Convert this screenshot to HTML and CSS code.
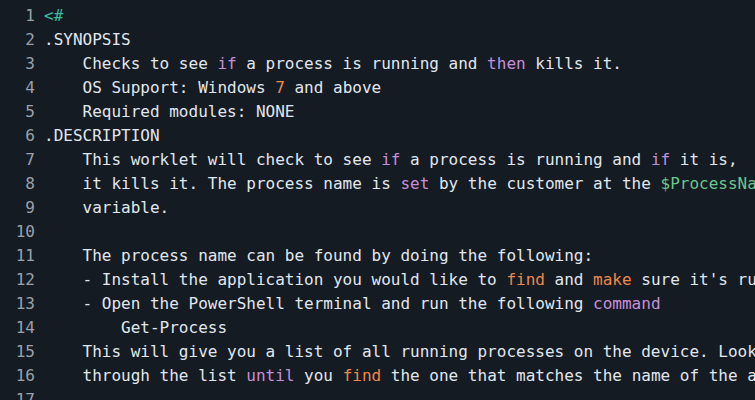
FILE: index.html
```html
<!DOCTYPE html>
<html>
<head>
<meta charset="utf-8">
<link rel="stylesheet" href="styles.css">
</head>
<body>
<div class="editor">
<div class="line"><span class="ln">1</span><span class="code"><span class="cm">&lt;#</span></span></div>
<div class="line"><span class="ln">2</span><span class="code">.SYNOPSIS</span></div>
<div class="line"><span class="ln">3</span><span class="code">    Checks to see <span class="kw">if</span> a process is running and <span class="kw">then</span> kills it.</span></div>
<div class="line"><span class="ln">4</span><span class="code">    OS Support: Windows <span class="num">7</span> and above</span></div>
<div class="line"><span class="ln">5</span><span class="code">    Required modules: NONE</span></div>
<div class="line"><span class="ln">6</span><span class="code">.DESCRIPTION</span></div>
<div class="line"><span class="ln">7</span><span class="code">    This worklet will check to see <span class="kw">if</span> a process is running and <span class="kw">if</span> it is,</span></div>
<div class="line"><span class="ln">8</span><span class="code">    it kills it. The process name is <span class="kw">set</span> by the customer at the <span class="var">$ProcessNa</span></span></div>
<div class="line"><span class="ln">9</span><span class="code">    variable.</span></div>
<div class="line"><span class="ln">10</span><span class="code"></span></div>
<div class="line"><span class="ln">11</span><span class="code">    The process name can be found by doing the following:</span></div>
<div class="line"><span class="ln">12</span><span class="code">    - Install the application you would like to <span class="num">find</span> and <span class="num">make</span> sure it's ru</span></div>
<div class="line"><span class="ln">13</span><span class="code">    - Open the PowerShell terminal and run the following <span class="kw">command</span></span></div>
<div class="line"><span class="ln">14</span><span class="code">        Get-Process</span></div>
<div class="line"><span class="ln">15</span><span class="code">    This will give you a list of all running processes on the device. Look</span></div>
<div class="line"><span class="ln">16</span><span class="code">    through the list <span class="kw">until</span> you <span class="num">find</span> the one that matches the name of the a</span></div>
<div class="line"><span class="ln">17</span><span class="code"></span></div>
</div>
</body>
</html>
```
FILE: styles.css
```css
html, body {
  margin: 0;
  padding: 0;
  background: #151b23;
  overflow: hidden;
}
.editor {
  padding-top: 4px;
  font-family: "DejaVu Sans Mono", monospace;
  font-size: 16px;
  line-height: 24px;
  color: #e1e7ee;
  width: 755px;
  height: 400px;
  overflow: hidden;
}
.line {
  display: flex;
  white-space: pre;
  height: 24px;
}
.ln {
  width: 35px;
  flex: none;
  text-align: right;
  color: #9aa1aa;
}
.code {
  margin-left: 9px;
}
.cm { color: #3fb9a0; }
.kw { color: #c78fd8; }
.num { color: #f0884a; }
.var { color: #6cc68e; }
```
